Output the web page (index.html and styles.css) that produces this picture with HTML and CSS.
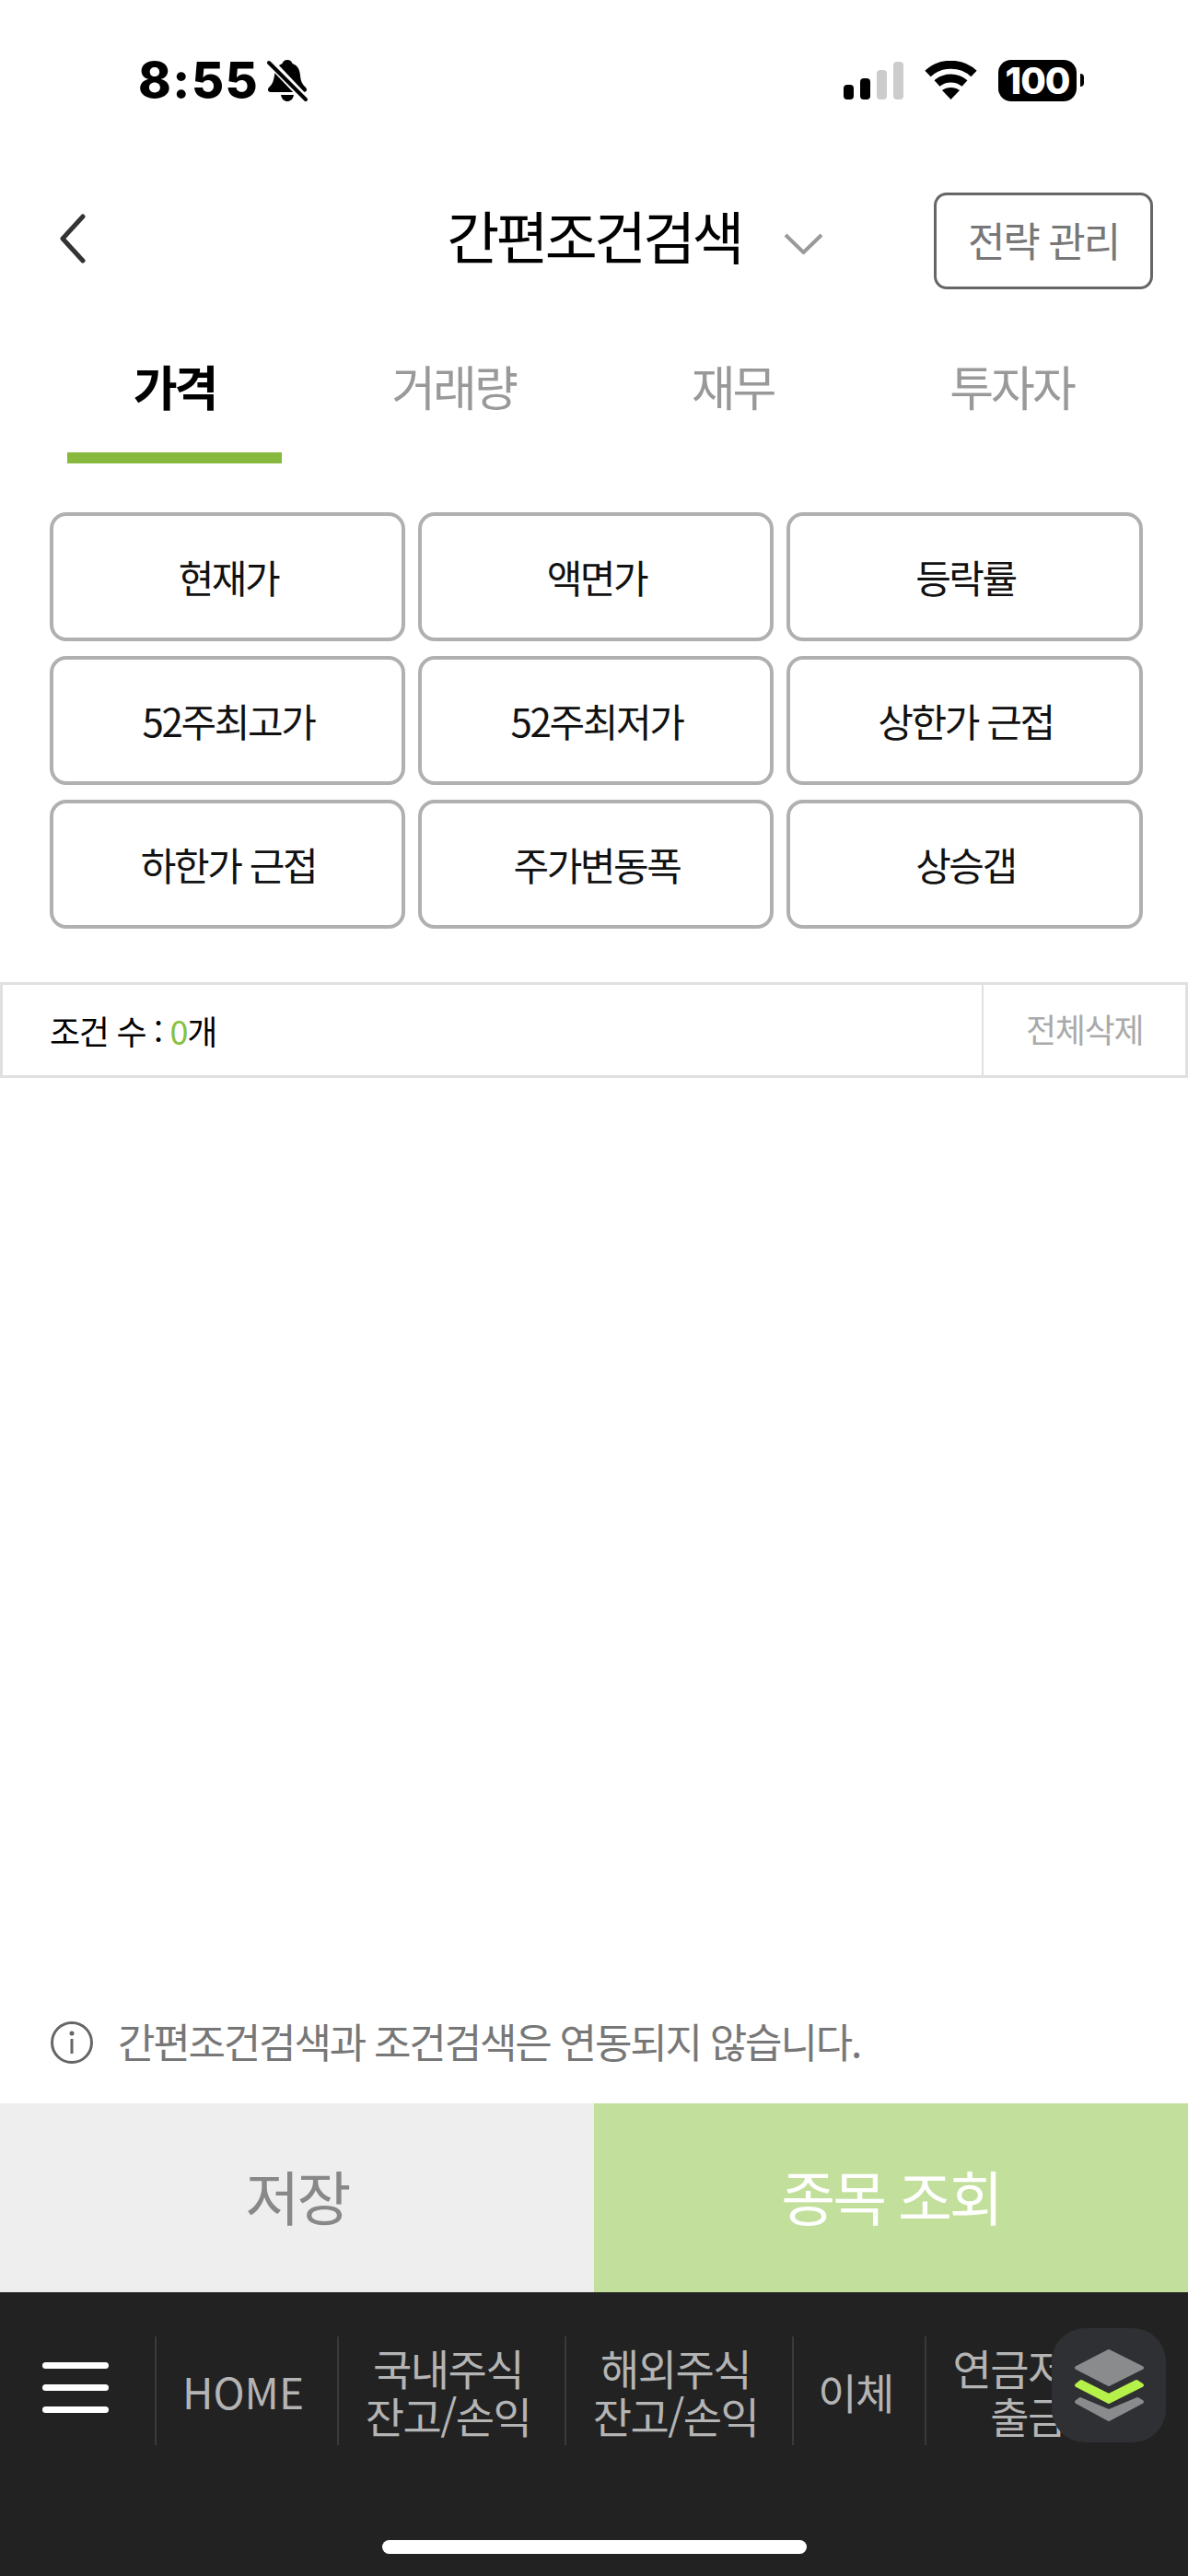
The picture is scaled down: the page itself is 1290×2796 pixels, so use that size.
FILE: index.html
```html
<!DOCTYPE html>
<html lang="ko">
<head>
    <meta charset="utf-8" />
    <title>간편조건검색</title>
    <link rel="stylesheet" href="styles.css">
</head>
<body>
<div class="screen">
    <div class="status">
        <div class="status-left">
            <span class="time">8:55</span>
            <svg class="bell" width="46" height="47" viewBox="0 0 46 47">
                <path d="M23 1c3 0 5 2 5.500 4 6 2 8 7 8.500 13 .5 6 2 9 6 13 2 2 1 5-2 5H5c-3 0-4-3-2-5 4-4 5-7 6-13 .5-6 3-11 8.500-13C18 3 20 1 23 1z"/>
                <path d="M16 39h14c-1 5-4 7-7 7s-6-2-7-7z"/>
                <path d="M3 2l40 42" stroke="#fff" stroke-width="9" fill="none"/>
                <path d="M3 4l40 40" stroke="#000" stroke-width="4" stroke-linecap="round" fill="none"/>
            </svg>
        </div>
        <div class="status-right">
            <svg class="signal" width="65" height="41" viewBox="0 0 65 41">
                <rect x="0" y="25" width="11" height="16" rx="4"/>
                <rect x="18" y="18" width="11" height="23" rx="4"/>
                <rect x="36" y="9" width="11" height="32" rx="4" fill="#ccc"/>
                <rect x="54" y="0" width="11" height="41" rx="4" fill="#ccc"/>
            </svg>
            <svg class="wifi" width="57" height="42" viewBox="0 0 57 42">
                <path d="M3.500 14C17 1 40 1 53.500 14" fill="none" stroke="#000" stroke-width="9"/>
                <path d="M13.500 24.500C22 17 35 17 43.500 24.500" fill="none" stroke="#000" stroke-width="9"/>
                <path d="M19 32c5-4 14-4 19 0L28.500 42z"/>
            </svg>
            <div class="battery">
                <span class="battery-body">100</span>
                <span class="battery-nub"></span>
            </div>
        </div>
    </div>

    <div class="header">
        <svg class="back" width="29" height="54" viewBox="0 0 29 54">
            <path d="M26 3L4 27l22 24" fill="none" stroke="#333" stroke-width="5" stroke-linecap="round" stroke-linejoin="round"/>
        </svg>
        <h1 class="title">간편조건검색</h1>
        <div class="header-right">
            <svg class="caret" width="43" height="23" viewBox="0 0 43 23">
                <path d="M2 2l19.500 19L41 2" fill="none" stroke="#999" stroke-width="4"/>
            </svg>
            <div class="manage">전략 관리</div>
        </div>
    </div>

    <div class="tabs">
        <div class="tab active">가격</div>
        <div class="tab">거래량</div>
        <div class="tab">재무</div>
        <div class="tab">투자자</div>
    </div>

    <div class="options">
        <div class="option">현재가</div>
        <div class="option">액면가</div>
        <div class="option">등락률</div>
        <div class="option">52주최고가</div>
        <div class="option">52주최저가</div>
        <div class="option">상한가 근접</div>
        <div class="option">하한가 근접</div>
        <div class="option">주가변동폭</div>
        <div class="option">상승갭</div>
    </div>

    <div class="count-bar">
        <div class="count">조건 수 : <span class="count-num">0</span>개</div>
        <div class="clear">전체삭제</div>
    </div>

    <div class="spacer"></div>

    <div class="notice">
        <svg class="info" width="46" height="46" viewBox="0 0 46 46">
            <circle cx="23" cy="23" r="21.500" fill="none" stroke="#666" stroke-width="3"/>
            <circle cx="23" cy="13" r="2.500" fill="#666"/>
            <rect x="21.500" y="19" width="3" height="16" fill="#666"/>
        </svg>
        <span>간편조건검색과 조건검색은 연동되지 않습니다.</span>
    </div>

    <div class="actions">
        <div class="action save">저장</div>
        <div class="action search">종목 조회</div>
    </div>

    <div class="nav">
        <div class="nav-row">
            <div class="menu"><span></span><span></span><span></span></div>
            <div class="nav-item home">HOME</div>
            <div class="nav-item stocks">국내주식<br>잔고/손익</div>
            <div class="nav-item stocks">해외주식<br>잔고/손익</div>
            <div class="nav-item transfer">이체</div>
            <div class="nav-item pension">연금저축<br>출금</div>
        </div>
        <div class="home-bar"></div>
        <div class="float-btn">
            <svg width="124" height="124" viewBox="0 0 124 124">
                <path d="M62 25L98 43 62 61 27 43z" fill="#8a8b8d" stroke="#8a8b8d" stroke-width="4" stroke-linejoin="round"/>
                <path d="M27 80l4-3 31 13 31-13 5 3-36 19z" fill="#8a8b8d" stroke="#8a8b8d" stroke-width="4" stroke-linejoin="round"/>
                <path d="M27 62l5-4 30 15 30-15 6 4-36 18z" fill="#b5f149" stroke="#b5f149" stroke-width="4" stroke-linejoin="round"/>
            </svg>
        </div>
    </div>
</div>
</body>
</html>
```

FILE: styles.css
```css
* { box-sizing: border-box; }
html, body { margin: 0; padding: 0; }
body {
    font-family: "Noto Sans CJK KR", "Noto Sans", sans-serif;
    background: #fff;
    color: #000;
}
.screen {
    width: 1290px;
    height: 2796px;
    display: flex;
    flex-direction: column;
    overflow: hidden;
}

/* status bar */
.status {
    height: 174px;
    flex: none;
    display: flex;
    align-items: center;
    justify-content: space-between;
    padding: 0 113px 0 150px;
}
.status-left { display: flex; align-items: center; gap: 8px; }
.time {
    font-family: Inter, sans-serif;
    font-weight: 800;
    font-size: 54px;
    line-height: 1;
    letter-spacing: 1.500px;
}
.status-right { display: flex; align-items: center; }
.signal { margin-right: 23px; }
.wifi { margin-right: 23px; }
.battery { display: flex; align-items: center; gap: 4px; }
.battery-body {
    width: 85px;
    height: 45px;
    border-radius: 14px;
    background: #000;
    color: #fff;
    font-family: Inter, sans-serif;
    font-weight: 800;
    font-size: 40px;
    line-height: 45px;
    letter-spacing: -1px;
    text-align: center;
}
.battery-nub {
    width: 4px;
    height: 14px;
    background: #000;
    border-radius: 0 4px 4px 0;
}

/* title row */
.header {
    height: 105px;
    margin-top: 35px;
    flex: none;
    display: grid;
    grid-template-columns: 1fr auto 1fr;
    align-items: center;
    padding: 0 38px;
}
.back { margin: 0 0 6px 26px; }
.title {
    margin: 0 0 14px;
    font-size: 62px;
    font-weight: 400;
    letter-spacing: -3.800px;
    line-height: 1;
}
.header-right {
    display: flex;
    align-items: center;
    justify-content: space-between;
    padding-left: 46px;
}
.caret { margin-top: 6px; }
.manage {
    width: 238px;
    height: 105px;
    border: 3px solid #666;
    border-radius: 14px;
    color: #777;
    font-size: 44px;
    letter-spacing: -2px;
    line-height: 96px;
    text-align: center;
}

/* tabs */
.tabs {
    display: grid;
    grid-template-columns: repeat(4, 303px);
    padding: 0 38px;
    margin-top: 60px;
    flex: none;
}
.tab {
    height: 129px;
    text-align: center;
    font-size: 52px;
    letter-spacing: -3px;
    line-height: 90px;
    color: #999;
}
.tab.active {
    color: #000;
    font-weight: 700;
    margin: 0 35px;
    border-bottom: 12px solid #86b93e;
}

/* option grid */
.options {
    display: grid;
    grid-template-columns: 386px 386px 387px;
    grid-auto-rows: 140px;
    gap: 16px 14px;
    margin-top: 53px;
    padding-left: 54px;
    flex: none;
}
.option {
    display: flex;
    align-items: center;
    justify-content: center;
    padding: 0 0 2px 2px;
    border: 4px solid #b0b0b0;
    border-radius: 18px;
    font-size: 42px;
    letter-spacing: -2.400px;
    color: #111;
}

/* condition count */
.count-bar {
    display: flex;
    height: 104px;
    margin-top: 58px;
    border: 3px solid #e0e0e0;
    flex: none;
    align-items: stretch;
    font-size: 36px;
    letter-spacing: -1.300px;
}
.count { flex: 1; padding-left: 51px; line-height: 98px; }
.count-num { color: #86c13e; }
.clear {
    width: 221px;
    border-left: 2px solid #e0e0e0;
    color: #aaa;
    line-height: 94px;
    padding-left: 46px;
}

.spacer { flex: 1; }

/* notice */
.notice {
    display: flex;
    align-items: center;
    gap: 27px;
    padding-left: 55px;
    height: 46px;
    margin-bottom: 43px;
    color: #777;
    font-size: 44px;
    letter-spacing: -2.200px;
    flex: none;
}
.notice span { margin-bottom: 4px; }

/* bottom buttons */
.actions { display: flex; height: 205px; flex: none; }
.action {
    flex: 1;
    display: flex;
    align-items: center;
    justify-content: center;
    padding-bottom: 8px;
    font-size: 64px;
    letter-spacing: -3px;
}
.save { background: #eee; color: #888; }
.search { background: #c2e09b; color: #fff; }

/* dark nav */
.nav {
    position: relative;
    height: 308px;
    flex: none;
    background: #222;
    padding-top: 48px;
    overflow: hidden;
}
.nav-row { display: flex; height: 118px; }
.menu {
    width: 168px;
    flex: none;
    display: flex;
    flex-direction: column;
    gap: 17px;
    padding: 28px 0 0 46px;
}
.menu span {
    width: 72px;
    height: 7px;
    border-radius: 4px;
    background: #fff;
}
.nav-item {
    flex: none;
    border-left: 2px solid #3a3a3a;
    display: flex;
    align-items: center;
    justify-content: center;
    padding-right: 8px;
    text-align: center;
    color: #b4b4b4;
    font-size: 46px;
    letter-spacing: -1.600px;
    line-height: 52px;
}
.nav-item.home { width: 198px; letter-spacing: 0; }
.stocks { width: 247px; }
.transfer { width: 144px; }
.pension { width: 230px; }
.home-bar {
    width: 461px;
    height: 15px;
    margin: 103px auto 0;
    border-radius: 8px;
    background: #fff;
}
.float-btn {
    position: absolute;
    left: 1142px;
    top: 39px;
    width: 124px;
    height: 124px;
    border-radius: 36px;
    background: #2f3034;
}
```
